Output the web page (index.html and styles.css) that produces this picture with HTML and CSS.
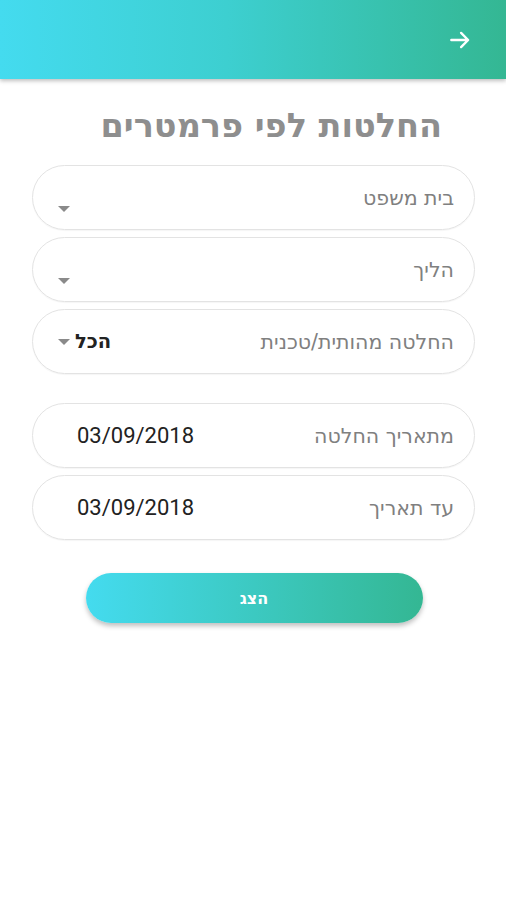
FILE: index.html
```html
<!DOCTYPE html>
<html lang="he" dir="rtl">
<head>
<meta charset="utf-8">
<link rel="stylesheet" href="styles.css">
</head>
<body>
<header class="appbar">
  <button class="back" aria-label="חזרה">
    <svg width="26" height="26" viewBox="0 0 24 24"><path d="M4 12h15M13 5.5l6.5 6.5-6.5 6.5" fill="none" stroke="#fff" stroke-width="2.2" stroke-linecap="round" stroke-linejoin="round"/></svg>
  </button>
</header>
<main class="content">
  <h1 class="title">החלטות לפי פרמטרים</h1>
  <div class="fields">
    <div class="field select">
      <span class="label">בית משפט</span>
      <span class="caret low"></span>
    </div>
    <div class="field select">
      <span class="label">הליך</span>
      <span class="caret low"></span>
    </div>
    <div class="field select">
      <span class="label">החלטה מהותית/טכנית</span>
      <span class="value-sel"><span class="sel-text">הכל</span><span class="caret"></span></span>
    </div>
  </div>
  <div class="fields dates">
    <div class="field">
      <span class="label">מתאריך החלטה</span>
      <span class="date">03/09/2018</span>
    </div>
    <div class="field">
      <span class="label">עד תאריך</span>
      <span class="date">03/09/2018</span>
    </div>
  </div>
  <div class="actions">
    <button class="show">הצג</button>
  </div>
</main>
</body>
</html>
```
FILE: styles.css
```css
* { box-sizing: border-box; }
html, body { margin: 0; padding: 0; background: #fff; }
body {
  width: 506px;
  height: 900px;
  font-family: "DejaVu Sans", "Open Sans", sans-serif;
  overflow: hidden;
}
.appbar {
  height: 79px;
  background: linear-gradient(to right, #44dbef, #3dcfd0 45%, #34b793);
  box-shadow: 0 2px 4px rgba(0,0,0,0.25);
  display: flex;
  align-items: center;
  padding-right: 33px;
  position: relative;
  z-index: 1;
}
.back {
  background: none;
  border: 0;
  padding: 0;
  width: 26px;
  height: 26px;
  display: flex;
}
.content {
  padding: 0 31px 0 32px;
}
.title {
  margin: 26px 33px 0 0;
  font-family: "DejaVu Sans", sans-serif;
  font-size: 33.5px;
  font-weight: 700;
  color: #8e8e8e;
  line-height: 42px;
}
.fields {
  display: flex;
  flex-direction: column;
  gap: 7px;
  margin-top: 18px;
}
.fields.dates { margin-top: 29px; }
.field {
  height: 65px;
  border: 1.5px solid #e3e3e3;
  border-radius: 33px;
  display: flex;
  align-items: center;
  justify-content: space-between;
  padding: 0 20px 0 44px;
  position: relative;
  box-shadow: 0 1px 1px rgba(0,0,0,0.04);
}
.label {
  font-family: "DejaVu Sans", sans-serif;
  font-size: 20.5px;
  color: #808080;
}
.caret {
  width: 0; height: 0;
  border-left: 6px solid transparent;
  border-right: 6px solid transparent;
  border-top: 6px solid #8a8a8a;
  display: inline-block;
}
.caret.low {
  position: absolute;
  left: 25px;
  top: 40px;
}
.field.select { padding-left: 25px; }
.value-sel {
  display: flex;
  align-items: center;
  gap: 5px;
}
.sel-text {
  font-family: "DejaVu Sans", sans-serif;
  font-size: 19.5px;
  color: #222;
  font-weight: 700;
}
.date {
  font-family: Roboto, "Liberation Sans", sans-serif;
  font-size: 22px;
  color: #222;
  direction: ltr;
}
.actions {
  display: flex;
  justify-content: center;
  margin-top: 33px;
}
.show {
  width: 337px;
  height: 50px;
  border: 0;
  border-radius: 25px;
  background: linear-gradient(to right, #44dbef, #34b793);
  color: #fff;
  font-family: "DejaVu Sans", sans-serif;
  font-weight: 700;
  font-size: 16px;
  box-shadow: 0 3px 5px rgba(0,0,0,0.25);
  margin-left: 1px;
}
```
